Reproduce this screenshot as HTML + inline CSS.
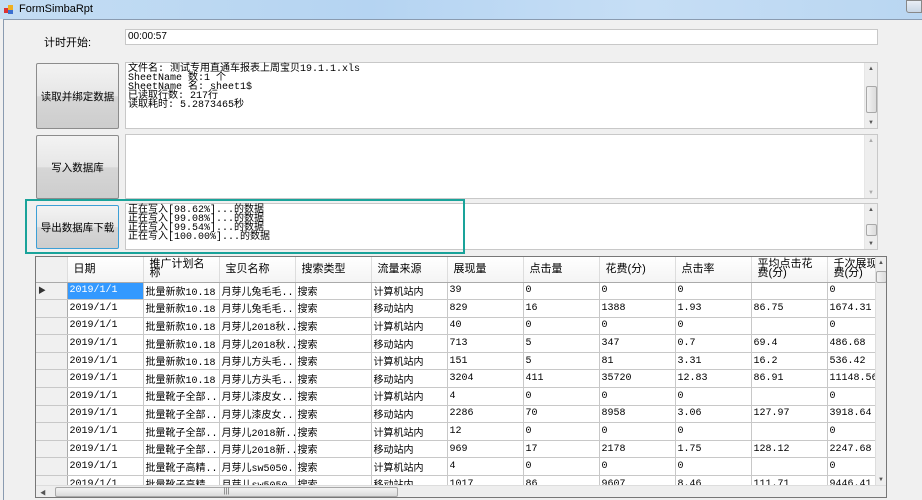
<!DOCTYPE html>
<html><head><meta charset="utf-8">
<style>
*{margin:0;padding:0;box-sizing:border-box}
body{width:922px;height:500px;overflow:hidden;background:#f0f0f0;position:relative;font-family:"Liberation Sans","Noto Sans CJK SC",sans-serif;font-size:11px;color:#000}
.title{position:absolute;left:0;top:0;width:922px;height:19px;background:linear-gradient(90deg,#c4ddf3,#b5d4f2 40%,#c6def5 70%,#b9d6f1);}
.title span{position:absolute;left:19px;top:3px;font-size:11px}
.icon{position:absolute;left:4px;top:5px;width:9px;height:9px}
.form{position:absolute;left:3px;top:19px;width:919px;height:481px;background:#f0f0f0;border-left:1px solid #8a9bb0;border-top:1px solid #8a9bb0}
.a{position:absolute}
.tb{position:absolute;background:#fff;border:1px solid #c8c8c8}
.btn{position:absolute;left:36px;width:83px;border:1px solid #8c8c8c;border-radius:2px;background:linear-gradient(#f3f3f3,#e6e6e6 50%,#d6d6d6 51%,#cdcdcd);display:flex;align-items:center;justify-content:center;font-size:10.5px}
.sb{position:absolute;right:0;top:0;bottom:0;width:13px;background:#eeeeee;border-left:1px solid #e6e6e6}
.mono{font-family:"Liberation Mono","Noto Sans CJK SC",monospace;font-size:10px;line-height:9px;padding:2px 0 0 2px;white-space:pre}
.thumb{position:absolute;left:1px;width:11px;background:linear-gradient(90deg,#f2f2f2,#dcdcdc);border:1px solid #a8a8a8;border-radius:2px}
.arr{position:absolute;left:3px;font-size:6px;color:#555}
table{border-collapse:collapse;table-layout:fixed;position:absolute;left:0;top:0}
td{border-right:1px solid #c8c8c8;border-bottom:1px solid #c8c8c8;height:17.6px;font-size:10px;padding-left:2px;white-space:nowrap;overflow:hidden;background:#fff;font-family:"Liberation Mono","Noto Sans CJK SC",monospace;vertical-align:middle}
td.rh{background:#f0f0f0;border-right:1px solid #aaa}
th{height:25px;font-weight:normal;text-align:left;padding-left:6px;font-size:11px;background:linear-gradient(#fff,#f4f4f4);border-right:1px solid #ddd;border-bottom:1px solid #aaa;line-height:9px;white-space:nowrap;overflow:hidden}
td.sel{background:#3399ff;color:#fff}
</style></head><body>
<div class="title">
<svg class="icon" viewBox="0 0 9 9"><rect x="0" y="3" width="4" height="5" fill="#d33"/><rect x="4" y="0" width="5" height="5" fill="#f0b020"/><rect x="4" y="5" width="5" height="4" fill="#3a6fd0"/></svg>
<span>FormSimbaRpt</span></div>
<div style="position:absolute;left:906px;top:0;width:16px;height:13px;border:1px solid #888;border-radius:0 0 0 3px;background:linear-gradient(#e8eef6,#c9d6e5)"></div>
<div class="form"></div>
<div class="a" style="left:44px;top:34px;font-size:11px">计时开始:</div>
<div class="tb" style="left:125px;top:29px;width:753px;height:16px"><span style="position:absolute;left:2px;top:1px;font-size:10px">00:00:57</span></div>

<div class="btn" style="top:63px;height:66px">读取并绑定数据</div>
<div class="btn" style="top:135px;height:64px">写入数据库</div>
<div class="btn" style="top:205px;height:44px;border-color:#3c9fd6">导出数据库下载</div>

<div class="tb" style="left:125px;top:62px;width:753px;height:67px">
<div class="mono">文件名: 测试专用直通车报表上周宝贝19.1.1.xls
SheetName 数:1 个
SheetName 名: sheet1$
已读取行数: 217行
读取耗时: 5.2873465秒</div>
<div class="sb"><span class="arr" style="top:3px">▲</span><div class="thumb" style="top:23px;height:27px"></div><span class="arr" style="bottom:2px">▼</span></div></div>

<div class="tb" style="left:125px;top:134px;width:753px;height:65px">
<div class="sb"><span class="arr" style="top:3px;color:#aaa">▲</span><span class="arr" style="bottom:2px;color:#aaa">▼</span></div></div>

<div class="tb" style="left:125px;top:203px;width:753px;height:47px">
<div class="mono">正在写入[98.62%]...的数据
正在写入[99.08%]...的数据
正在写入[99.54%]...的数据
正在写入[100.00%]...的数据</div>
<div class="sb"><span class="arr" style="top:3px">▲</span><div class="thumb" style="top:20px;height:12px"></div><span class="arr" style="bottom:2px">▼</span></div></div>

<div class="a" style="left:25px;top:199px;width:440px;height:55px;border:2px solid #1aa39a"></div>

<div class="a" style="left:35px;top:256px;width:852px;height:242px;border:1px solid #777;background:#f0f0f0;overflow:hidden">
<table style="width:840px">
<colgroup><col style="width:31px"><col style="width:76px"><col style="width:76px"><col style="width:76px"><col style="width:76px"><col style="width:76px"><col style="width:76px"><col style="width:76px"><col style="width:76px"><col style="width:76px"><col style="width:76px"><col style="width:49px"></colgroup>
<tr><th style="background:#f0f0f0"></th><th>日期</th><th>推广计划名<br>称</th><th>宝贝名称</th><th>搜索类型</th><th>流量来源</th><th>展现量</th><th>点击量</th><th>花费(分)</th><th>点击率</th><th>平均点击花<br>费(分)</th><th>千次展现花<br>费(分)</th></tr>
<tr><td class="rh" style="font-size:8px;color:#333">▶</td><td class="sel">2019/1/1</td><td>批量新款10.18</td><td>月芽儿兔毛毛...</td><td>搜索</td><td>计算机站内</td><td>39</td><td>0</td><td>0</td><td>0</td><td></td><td>0</td></tr>
<tr><td class="rh"></td><td>2019/1/1</td><td>批量新款10.18</td><td>月芽儿兔毛毛...</td><td>搜索</td><td>移动站内</td><td>829</td><td>16</td><td>1388</td><td>1.93</td><td>86.75</td><td>1674.31</td></tr>
<tr><td class="rh"></td><td>2019/1/1</td><td>批量新款10.18</td><td>月芽儿2018秋...</td><td>搜索</td><td>计算机站内</td><td>40</td><td>0</td><td>0</td><td>0</td><td></td><td>0</td></tr>
<tr><td class="rh"></td><td>2019/1/1</td><td>批量新款10.18</td><td>月芽儿2018秋...</td><td>搜索</td><td>移动站内</td><td>713</td><td>5</td><td>347</td><td>0.7</td><td>69.4</td><td>486.68</td></tr>
<tr><td class="rh"></td><td>2019/1/1</td><td>批量新款10.18</td><td>月芽儿方头毛...</td><td>搜索</td><td>计算机站内</td><td>151</td><td>5</td><td>81</td><td>3.31</td><td>16.2</td><td>536.42</td></tr>
<tr><td class="rh"></td><td>2019/1/1</td><td>批量新款10.18</td><td>月芽儿方头毛...</td><td>搜索</td><td>移动站内</td><td>3204</td><td>411</td><td>35720</td><td>12.83</td><td>86.91</td><td>11148.56</td></tr>
<tr><td class="rh"></td><td>2019/1/1</td><td>批量靴子全部...</td><td>月芽儿漆皮女...</td><td>搜索</td><td>计算机站内</td><td>4</td><td>0</td><td>0</td><td>0</td><td></td><td>0</td></tr>
<tr><td class="rh"></td><td>2019/1/1</td><td>批量靴子全部...</td><td>月芽儿漆皮女...</td><td>搜索</td><td>移动站内</td><td>2286</td><td>70</td><td>8958</td><td>3.06</td><td>127.97</td><td>3918.64</td></tr>
<tr><td class="rh"></td><td>2019/1/1</td><td>批量靴子全部...</td><td>月芽儿2018新...</td><td>搜索</td><td>计算机站内</td><td>12</td><td>0</td><td>0</td><td>0</td><td></td><td>0</td></tr>
<tr><td class="rh"></td><td>2019/1/1</td><td>批量靴子全部...</td><td>月芽儿2018新...</td><td>搜索</td><td>移动站内</td><td>969</td><td>17</td><td>2178</td><td>1.75</td><td>128.12</td><td>2247.68</td></tr>
<tr><td class="rh"></td><td>2019/1/1</td><td>批量靴子高精...</td><td>月芽儿sw5050...</td><td>搜索</td><td>计算机站内</td><td>4</td><td>0</td><td>0</td><td>0</td><td></td><td>0</td></tr>
<tr><td class="rh"></td><td>2019/1/1</td><td>批量靴子高精...</td><td>月芽儿sw5050...</td><td>搜索</td><td>移动站内</td><td>1017</td><td>86</td><td>9607</td><td>8.46</td><td>111.71</td><td>9446.41</td></tr>
</table>
<div class="a" style="left:839px;top:0;width:12px;height:228px;background:#eee;border-left:1px solid #ddd"><span class="arr" style="top:3px;left:2px">▲</span><div class="thumb" style="top:14px;height:12px;left:0"></div><span class="arr" style="bottom:2px;left:2px">▼</span></div>
<div class="a" style="left:0;top:228px;width:851px;height:13px;background:#eee;border-top:1px solid #ddd"><span class="arr" style="left:4px;top:2px">◀</span><div class="a" style="left:19px;top:1px;width:343px;height:10px;border:1px solid #a8a8a8;border-radius:2px;background:linear-gradient(#f4f4f4,#dadada);font-size:7px;text-align:center;line-height:8px;color:#555">|||</div></div>
</div>
</body></html>
